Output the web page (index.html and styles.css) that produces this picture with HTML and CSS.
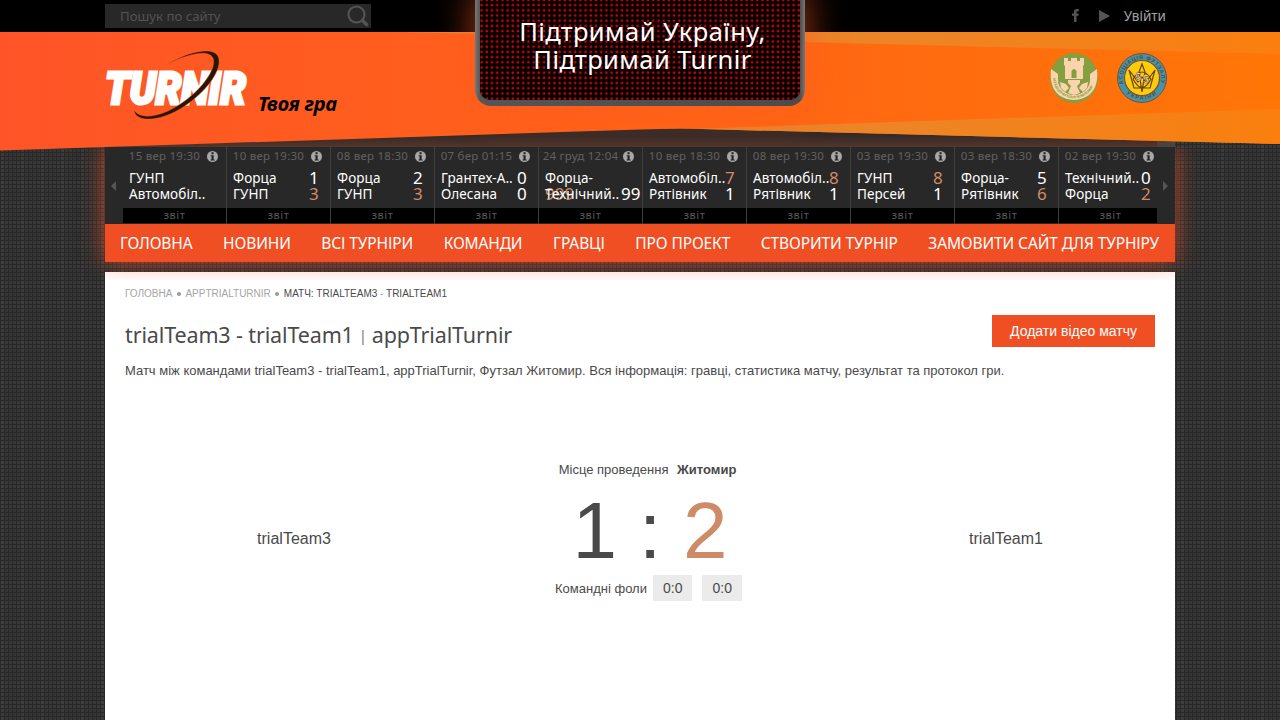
FILE: index.html
```html
<!DOCTYPE html>
<html lang="uk">
<head>
<meta charset="utf-8">
<title>trialTeam3 - trialTeam1 | appTrialTurnir</title>
<link rel="stylesheet" href="styles.css">
</head>
<body>
<svg class="defs" width="0" height="0">
  <symbol id="info" viewBox="0 0 11 11"><circle cx="5.5" cy="5.5" r="5.5" fill="#a8a8a8"/><path d="M4.500 1.300h2.100v1.900h-2.100zM3.600 4.200h3v4.200h1v1.100H3.500v-1.100h1V5.300h-.9z" fill="#222"/></symbol>
</svg>
<svg class="banner" width="1280" height="160" viewBox="0 0 1280 160">
  <defs>
    <linearGradient id="main" x1="0" x2="1"><stop offset="0" stop-color="#ff5427"/><stop offset=".35" stop-color="#ff5f1d"/><stop offset=".55" stop-color="#ff6416"/><stop offset="1" stop-color="#ff7606"/></linearGradient>
    <linearGradient id="light" gradientUnits="userSpaceOnUse" x1="690" x2="1280" y1="0" y2="0"><stop offset="0" stop-color="#ea842c"/><stop offset=".4" stop-color="#ee8424"/><stop offset="1" stop-color="#fa7f0e"/></linearGradient>
    <linearGradient id="shade" gradientUnits="userSpaceOnUse" x1="0" x2="0" y1="128" y2="147"><stop offset="0" stop-color="#2d2b2a"/><stop offset=".4" stop-color="#352a27"/><stop offset="1" stop-color="#53352b"/></linearGradient>
  </defs>
  <path d="M105 120H1175V147H105z" fill="url(#shade)"/>
  <path d="M1157 141H1175V147H1157z" fill="#4b413d"/>
  <path d="M0 32H1280V144L720 129.500Q680 128 640 129.500L0 150.500z" fill="url(#main)"/>
  <path d="M400 32H1280V54z" fill="url(#light)"/>
  <path d="M695 128.700L1280 109V144L720 129.500z" fill="url(#light)"/>
</svg>
<div class="page">
  <div class="topbar">
    <div class="inner">
      <div class="search"><span>Пошук по сайту</span>
        <svg width="22" height="22" viewBox="0 0 22 22" fill="none" stroke="#535353"><circle cx="9.500" cy="9.500" r="8" stroke-width="2.200"/><path d="M15.500 15.500L19.500 19.500" stroke-width="3.600" stroke-linecap="round"/></svg>
      </div>
      <div class="account">
        <svg class="fb" width="7" height="13" viewBox="0 0 7 13"><path d="M2 13V6.800H0V4.500H2V3Q2 0 5 0H6.800V2.300H5.500Q4.500 2.300 4.500 3.300V4.500H6.700L6.400 6.800H4.500V13z" fill="#555"/></svg>
        <svg class="play" width="11" height="12" viewBox="0 0 11 12"><path d="M0 0L11 6L0 12z" fill="#555"/></svg>
        <span>Увійти</span>
      </div>
    </div>
  </div>
  <header class="inner header">
    <svg class="logo" width="150" height="80" viewBox="0 0 150 80">
      <text x="0" y="57" textLength="141" lengthAdjust="spacingAndGlyphs" class="logo-text">TURNIR</text>
      <path class="swoosh" d="M61 18C85 3 108 0 113 9C121 25 88 60 60 69C42 75 30 72 29 63C34 71 47 71 63 64C89 52 113 24 108 11C104 3 86 5 61 18z"/>
    </svg>
    <div class="slogan">Твоя гра</div>
    <div class="emblems">
      <svg width="48" height="50" viewBox="0 0 48 50"><ellipse cx="24" cy="25" rx="24" ry="25" fill="#849f3f"/>
        <g fill="#fbd3ad"><path d="M14 5h4v3h3V5h6v3h3V5h4v7l-1 1v13H15V13l-1-1z"/><path d="M1 16l7 5v6h32v-6l7-5C49 35 41 46 24 47C7 46-1 35 1 16z"/></g>
        <path d="M8 27h32c0 8-7 15-16 15S8 35 8 27z" fill="#849f3f"/><path d="M18 27h12v3l-3 3 3 7-6 2-6-2 3-7-3-3zM10 29l6 2 3 4-4 4-4-4zM38 29l-6 2-3 4 4 4 4-4z" fill="#fbd3ad"/><path d="M21.500 25v-7q2.500-4 5 0v7z" fill="#849f3f"/>
        <path id="ring1" d="M3 25C5 52 43 52 45 25" fill="none"/><text class="ring-green"><textPath href="#ring1" textLength="56">АСОЦІАЦІЯ ФУТЗАЛУ М.ЖИТОМИР</textPath></text></svg>
      <svg width="50" height="50" viewBox="0 0 50 50"><circle cx="25" cy="25" r="24.500" fill="#4792a5" stroke="#765332"/><circle cx="25" cy="25" r="17.500" fill="#ffcb0b" stroke="#765332" stroke-width="1.200"/>
        <path id="ring2" d="M6.500 31A19.300 19.300 0 1 1 43.500 31" fill="none"/><path id="ring3" d="M8 39A22.800 22.800 0 0 0 42 39" fill="none"/>
        <text class="ring-blue"><textPath href="#ring2" textLength="70">АСОЦІАЦІЯ ФУТЗАЛУ</textPath></text><text class="ring-blue"><textPath href="#ring3" startOffset="2" textLength="33">УКРАЇНИ</textPath></text>
        <path d="M25 11l-3 8 3 20 3-20zM12 17l5 18h16l5-18-9 12-4-5-4 5zM16 26q9-14 18 0-9 17-18 0" fill="none" stroke="#654313" stroke-width="1.200"/><text x="18.500" y="28" class="five">5</text><text x="26" y="30" class="five">5</text></svg>
    </div>
  </header>
  <div class="inner glow">
    <section class="matches">
      <div class="arrow"><svg width="5" height="10"><path d="M5 0V10L0 5z" fill="#555"/></svg></div>
      <article><div class="date"><span>15 вер 19:30</span><svg><use href="#info"/></svg></div><div class="team"><span>ГУНП</span></div><div class="team"><span>Автомобіл..</span></div><div class="report">звіт</div></article>
      <article><div class="date"><span>10 вер 19:30</span><svg><use href="#info"/></svg></div><div class="team"><span>Форца</span><b>1</b></div><div class="team"><span>ГУНП</span><b class="win">3</b></div><div class="report">звіт</div></article>
      <article><div class="date"><span>08 вер 18:30</span><svg><use href="#info"/></svg></div><div class="team"><span>Форца</span><b>2</b></div><div class="team"><span>ГУНП</span><b class="win">3</b></div><div class="report">звіт</div></article>
      <article><div class="date"><span>07 бер 01:15</span><svg><use href="#info"/></svg></div><div class="team"><span>Грантех-А..</span><b>0</b></div><div class="team"><span>Олесана</span><b>0</b></div><div class="report">звіт</div></article>
      <article><div class="date"><span>24 груд 12:04</span><svg><use href="#info"/></svg></div><div class="team"><span>Форца-</span></div><div class="team"><i class="win overlap">999</i><span>Технічний..</span><b>99</b></div><div class="report">звіт</div></article>
      <article><div class="date"><span>10 вер 18:30</span><svg><use href="#info"/></svg></div><div class="team"><span>Автомобіл..</span><b class="win">7</b></div><div class="team"><span>Рятівник</span><b>1</b></div><div class="report">звіт</div></article>
      <article><div class="date"><span>08 вер 19:30</span><svg><use href="#info"/></svg></div><div class="team"><span>Автомобіл..</span><b class="win">8</b></div><div class="team"><span>Рятівник</span><b>1</b></div><div class="report">звіт</div></article>
      <article><div class="date"><span>03 вер 19:30</span><svg><use href="#info"/></svg></div><div class="team"><span>ГУНП</span><b class="win">8</b></div><div class="team"><span>Персей</span><b>1</b></div><div class="report">звіт</div></article>
      <article><div class="date"><span>03 вер 18:30</span><svg><use href="#info"/></svg></div><div class="team"><span>Форца-</span><b>5</b></div><div class="team"><span>Рятівник</span><b class="win">6</b></div><div class="report">звіт</div></article>
      <article><div class="date"><span>02 вер 19:30</span><svg><use href="#info"/></svg></div><div class="team"><span>Технічний..</span><b>0</b></div><div class="team"><span>Форца</span><b class="win">2</b></div><div class="report">звіт</div></article>
      <div class="arrow"><svg width="5" height="10"><path d="M0 0V10L5 5z" fill="#555"/></svg></div>
    </section>
    <nav class="menu"><a>ГОЛОВНА</a><a>НОВИНИ</a><a>ВСІ ТУРНІРИ</a><a>КОМАНДИ</a><a>ГРАВЦІ</a><a>ПРО ПРОЕКТ</a><a>СТВОРИТИ ТУРНІР</a><a>ЗАМОВИТИ САЙТ ДЛЯ ТУРНІРУ</a></nav>
  </div>
  <main class="inner content">
    <div class="crumbs"><span>ГОЛОВНА</span><i></i><span>APPTRIALTURNIR</span><i></i><span class="current">МАТЧ: TRIALTEAM3 <em>-</em> TRIALTEAM1</span></div>
    <div class="heading"><h1>trialTeam3 - trialTeam1 <span class="bar">|</span> appTrialTurnir</h1><a class="button">Додати відео матчу</a></div>
    <p class="intro">Матч між командами trialTeam3 - trialTeam1, appTrialTurnir, Футзал Житомир. Вся інформація: гравці, статистика матчу, результат та протокол гри.</p>
    <div class="game">
      <div class="side">trialTeam3</div>
      <div class="center">
        <div class="place">Місце проведення <strong>Житомир</strong></div>
        <div class="score"><span>1</span><span>:</span><span class="win">2</span></div>
        <div class="fouls"><span>Командні фоли</span><b>0:0</b><b>0:0</b></div>
      </div>
      <div class="side">trialTeam1</div>
    </div>
  </main>
</div>
<div class="board">
  <svg width="320" height="100"><defs><pattern id="led" width="5.200" height="5.200" patternUnits="userSpaceOnUse"><rect x="0.300" y="4" width="2.600" height="1.200" fill="#7a0000"/><rect x="0.300" y="0" width="2.600" height="1.200" fill="#7a0000"/><rect x=".7" y="4.100" width="1.900" height="1.100" fill="#c80808"/><rect x=".7" y="0" width="1.900" height=".8" fill="#c80808"/></pattern></defs><rect width="320" height="100" fill="url(#led)"/></svg>
  <div class="board-text"><span>Підтримай Україну,</span><span>Підтримай Turnir</span></div>
</div>
</body>
</html>
```
FILE: styles.css
```css
* { box-sizing: border-box; }
body {
  margin: 0; height: 720px; overflow: hidden; position: relative;
  font-family: "Liberation Sans", Arial, sans-serif; font-size: 13px; color: #4a4a4a;
  background-color: #343434;
  background-image: linear-gradient(90deg, #282828 1px, transparent 1px), linear-gradient(#282828 1px, transparent 1px), linear-gradient(90deg, rgba(255, 255, 255, .03) 4px, transparent 4px), linear-gradient(rgba(255, 255, 255, .02) 8px, transparent 8px);
  background-size: 4px 4px, 4px 4px, 20px 12px, 20px 20px;
}
.defs { position: absolute; }
.banner { position: absolute; left: 0; top: 0; }
.page { position: relative; height: 720px; display: flex; flex-direction: column; }
.inner { width: 1070px; margin: 0 auto; }
.win { color: #cf8b66; }
.topbar { height: 32px; background: #000; font-family: "Noto Sans", sans-serif; }
.topbar .inner { display: flex; justify-content: space-between; padding-top: 4px; }
.search { width: 266px; height: 24px; background: #282828; color: #535353; padding: 0 2px 0 15px; display: flex; align-items: center; justify-content: space-between; font-size: 13.200px; }
.account { display: flex; align-items: center; padding: 0 9px 1px 0; font-size: 13.500px; color: #a2a2a2; }
.fb { margin-right: 20px; }
.play { margin-right: 14px; }
.header { height: 115px; display: flex; align-items: flex-start; padding-top: 15px; }
.logo { margin: 0 3px 0 0; overflow: visible; }
.logo-text { font: italic 900 45px Roboto, sans-serif; fill: #fff; stroke: #fff; stroke-width: 3px; }
.swoosh { fill: #271600; stroke: #ff5a20; stroke-width: .5px; }
.slogan { font: italic 700 20px/24px "Noto Sans", sans-serif; letter-spacing: -.2px; color: #000; margin-top: 45px; }
.emblems { display: flex; gap: 19px; margin: 6px 8px 0 auto; }
.ring-green { font: 700 3.500px "Liberation Sans", sans-serif; fill: #849f3f; }
.ring-blue { font: 700 5.500px "Liberation Sans", sans-serif; fill: #5e4838; }
.five { font: 700 10px "Liberation Sans", sans-serif; fill: #fff; stroke: #654313; stroke-width: .5px; }
.glow { position: relative; z-index: 2; box-shadow: 0 0 22px rgba(241, 79, 35, .7); clip-path: inset(0 -40px -18px -40px); font-family: "Noto Sans", sans-serif; }
.matches { height: 77px; display: flex; background: #282828; }
.arrow { width: 18px; display: flex; align-items: center; justify-content: center; }
.arrow svg { position: relative; left: -1px; }
article { width: 104px; border-right: 1px solid #404040; height: 77px; }
article:nth-of-type(10) { width: 98px; flex: 1; border-right: 0; }
article:nth-of-type(10) .report { padding-left: 5px; }
.date { height: 22px; display: flex; align-items: center; padding-bottom: 4px; font-size: 11.500px; color: #616161; }
.date span { width: 83px; text-align: center; white-space: nowrap; letter-spacing: .25px; padding-bottom: 2px; }
.date svg { width: 11px; height: 11px; margin-left: 1px; }
.team { position: relative; height: 16px; line-height: 16px; display: flex; padding-left: 6px; font-size: 13.500px; color: #fff; top: 1px; }
.team span { position: relative; z-index: 1; width: 76px; white-space: nowrap; letter-spacing: .1px; }
.team b { font-size: 17px; font-weight: 400; }
.overlap { position: absolute; left: 6px; font-size: 17px; font-style: normal; }
.report { height: 15px; line-height: 14px; background: #000; margin-top: 7px; text-align: center; font-size: 11px; letter-spacing: .5px; color: #5a5a5a; }
.menu { height: 38px; background: #f04e23; display: flex; justify-content: space-between; align-items: center; padding: 0 16px 1px 15px; color: #fff; font-size: 15.500px; letter-spacing: -.12px; white-space: nowrap; }
.content { margin-top: 10px; height: 448px; background: #fff; padding: 16px 20px; }
.crumbs { display: flex; height: 12px; line-height: 12px; font-size: 10px; color: #a5a5a5; align-items: center; }
.crumbs i { width: 4px; height: 4px; border-radius: 50%; background: #999; margin: 0 4.500px; }
.current { color: #4a4a4a; }
.current em { font-style: normal; color: #999; }
.heading { display: flex; justify-content: space-between; margin-top: 15px; height: 40px; }
h1 { margin: 3px 0 0; font: 400 21.500px/34px "Noto Sans", sans-serif; letter-spacing: -.13px; color: #4a4a4a; white-space: nowrap; }
.bar { display: inline-block; font-size: 15px; line-height: 15px; vertical-align: 2px; width: 9px; text-align: center; margin: 0 -1px; color: #777; }
.button { width: 163px; height: 32px; background: #f04e23; color: #fff; text-align: center; font-size: 14px; line-height: 32px; }
.intro { margin: 8px 0 0; line-height: 16px; white-space: nowrap; }
.game { display: flex; margin: 83px -20px 0 0; height: 150px; }
.side { width: 338px; padding-top: 68px; font-size: 16px; line-height: 18px; text-align: center; }
.center { flex: 1; }
.place { line-height: 16px; text-align: center; padding-right: 5px; }
.place strong { margin-left: 5px; }
.score { display: flex; justify-content: center; gap: 22px; font-size: 80px; line-height: 80px; margin: 13px 0 0; }
.fouls { display: flex; justify-content: center; align-items: center; margin: 4px 3px 0 0; }
.fouls b { width: 39.500px; height: 26px; line-height: 26px; background: #ebebeb; text-align: center; font-size: 14px; font-weight: 400; margin-left: 10px; }
.fouls span + b { margin-left: 6px; }
.board { position: absolute; z-index: 3; left: 475px; top: -10px; width: 330px; height: 116px; padding: 10px 5px 6px; border-radius: 0 0 16px 16px; background: linear-gradient(90deg, #777, #555 5px, #4b4b4b 325px, #777); box-shadow: 0 0 38px rgba(255, 88, 30, .65); }
.board > svg { display: block; background: #050000; border-radius: 0 0 10px 10px; }
.board-text { position: absolute; left: 1px; right: -4px; top: 27px; display: flex; flex-direction: column; align-items: center; font: 25.500px/28px "Noto Sans", sans-serif; letter-spacing: .4px; color: #fff; white-space: nowrap; }
```
